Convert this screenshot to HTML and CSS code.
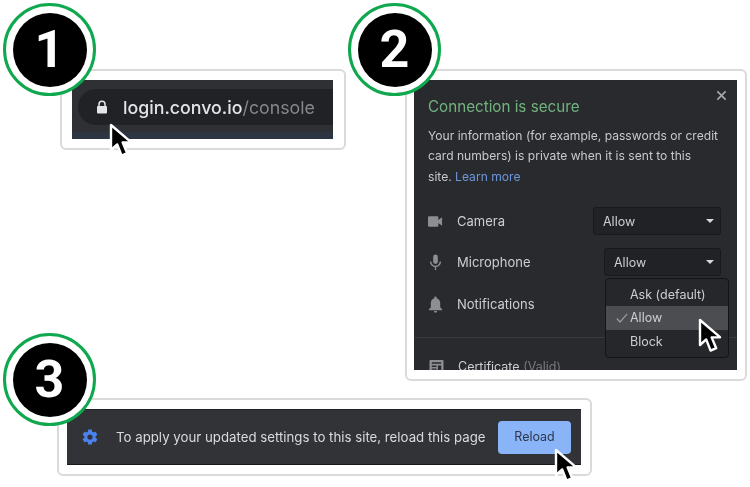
FILE: index.html
```html
<!DOCTYPE html>
<html lang="en">
<head>
    <meta charset="UTF-8">
    <meta name="viewport" content="width=device-width, initial-scale=1.0">
    <title>Allow microphone access</title>
    <link rel="stylesheet" href="styles.css">
</head>
<body>

    <svg class="defs" width="0" height="0">
        <symbol id="pointer" viewBox="0 0 24 36">
            <path d="M2 2 L2 27 L8.2 21.4 L12.6 32.6 L18.2 30.2 L13.6 19.4 L22 19.2 Z" fill="#000" stroke="#fff" stroke-width="2.4" stroke-linejoin="round"/>
        </symbol>
    </svg>

    <div class="top-row">
        <div class="card card-url">
            <div class="badge"><span>1</span></div>
            <div class="shot shot-url">
                <div class="url-pill">
                    <svg class="lock" viewBox="0 0 12 14"><path d="M3 6V4.2a3 3 0 0 1 6 0V6" fill="none" stroke="#e4e5e7" stroke-width="1.5"/><rect x="1" y="6" width="10" height="7.6" rx="1" fill="#e4e5e7"/></svg>
                    <span class="url">login.convo.io<span class="url-path">/console</span></span>
                </div>
            </div>
            <svg class="pointer pointer-url"><use href="#pointer"/></svg>
        </div>

        <div class="card card-site">
            <div class="badge"><span>2</span></div>
            <div class="shot shot-site">
                <svg class="close" viewBox="0 0 12 12"><path d="M1.5 1.5l9 9M10.5 1.5l-9 9" stroke="#a6a8ac" stroke-width="1.8"/></svg>
                <h2 class="secure">Connection is secure</h2>
                <p class="info">Your information (for example, passwords or credit card numbers) is private when it is sent to this<br>site. <a class="learn" href="#">Learn more</a></p>

                <div class="perm perm-camera">
                    <svg class="perm-icon" viewBox="0 0 16 12"><path d="M0 1.5A1.2 1.2 0 0 1 1.2.3h8.6A1.2 1.2 0 0 1 11 1.5v9a1.2 1.2 0 0 1-1.2 1.2H1.2A1.2 1.2 0 0 1 0 10.5zM11 4.3l4-2.800v9l-4-2.800z" fill="#8c8e92"/></svg>
                    <span class="perm-name">Camera</span>
                    <div class="select select-camera">Allow<i class="caret"></i></div>
                </div>
                <div class="perm perm-mic">
                    <svg class="perm-icon perm-icon-tall" viewBox="0 0 16 18"><rect x="5.5" y="0.5" width="5" height="10" rx="2.5" fill="#8c8e92"/><path d="M2.800 8a5.200 5.200 0 0 0 10.400 0M8 13.200V17" fill="none" stroke="#8c8e92" stroke-width="1.5"/></svg>
                    <span class="perm-name">Microphone</span>
                    <div class="select select-mic">Allow<i class="caret"></i></div>
                </div>
                <div class="perm perm-bell">
                    <svg class="perm-icon perm-icon-tall" viewBox="0 0 16 18"><path d="M8 .5a1.300 1.300 0 0 1 1.300 1.300v.5C11.700 3 13 5 13 7.5V12l2 2v1H1v-1l2-2V7.5C3 5 4.300 3 6.700 2.300v-.5A1.300 1.300 0 0 1 8 .5zM6.300 16h3.400a1.700 1.700 0 0 1-3.400 0z" fill="#8c8e92"/></svg>
                    <span class="perm-name">Notifications</span>
                </div>

                <div class="cert">
                    <svg class="perm-icon" viewBox="0 0 16 16"><path fill-rule="evenodd" d="M1.500 1h13A1 1 0 0 1 15.500 2v12a1 1 0 0 1-1 1h-13a1 1 0 0 1-1-1V2a1 1 0 0 1 1-1zM3 3.500V5h10V3.500zM3 7v1.500h5V7zM3 10v1.500h5V10zM9.500 7v5H13V7z" fill="#8c8e92"/></svg>
                    <span class="cert-name">Certificate <span class="cert-state">(Valid)</span></span>
                </div>

                <ul class="menu">
                    <li>Ask (default)</li>
                    <li class="menu-active"><svg class="tick" viewBox="0 0 12 10"><path d="M.8 5.500l3.200 3.500L11.200.8" fill="none" stroke="#9a9b9f" stroke-width="1.2"/></svg>Allow</li>
                    <li>Block</li>
                </ul>
            </div>
            <svg class="pointer pointer-menu"><use href="#pointer"/></svg>
        </div>
    </div>

    <div class="card card-reload">
        <div class="badge"><span>3</span></div>
        <div class="shot shot-reload">
            <svg class="gear" viewBox="0 0 24 24"><path fill="#4c82ee" d="M19.430 12.980a7.800 7.800 0 0 0 0-1.960l2.110-1.650a.5.5 0 0 0 .12-.64l-2-3.460a.5.5 0 0 0-.61-.22l-2.490 1a7.300 7.300 0 0 0-1.690-.98l-.38-2.650A.49.49 0 0 0 14 2h-4a.49.49 0 0 0-.49.42l-.38 2.650a7.700 7.700 0 0 0-1.690.98l-2.490-1a.49.49 0 0 0-.61.22l-2 3.460a.49.49 0 0 0 .12.64l2.110 1.650a7.900 7.900 0 0 0 0 1.960l-2.110 1.650a.5.5 0 0 0-.12.64l2 3.460a.5.5 0 0 0 .61.22l2.490-1c.52.4 1.080.73 1.690.98l.38 2.650c.03.24.24.42.49.42h4c.25 0 .46-.18.49-.42l.38-2.650a7.700 7.700 0 0 0 1.690-.98l2.490 1a.49.49 0 0 0 .61-.22l2-3.460a.5.5 0 0 0-.12-.64zM12 15.500a3.500 3.500 0 1 1 0-7 3.500 3.500 0 0 1 0 7z"/></svg>
            <span class="reload-text">To apply your updated settings to this site, reload this page</span>
            <button class="reload-btn">Reload</button>
        </div>
        <svg class="pointer pointer-reload"><use href="#pointer"/></svg>
    </div>

</body>
</html>
```

FILE: styles.css
```css
html, body {
    margin: 0;
    height: 100%;
    overflow: hidden;
    background: #fff;
}
body {
    font-family: Inter, "Liberation Sans", sans-serif;
    color: #dcdde0;
}
.defs {
    display: block;
    height: 0;
}

.top-row {
    display: flex;
    align-items: flex-start;
    gap: 59px;
    padding: 69px 0 0 60px;
}

.card {
    position: relative;
    box-sizing: border-box;
    flex: none;
    background: #fff;
    border: 2px solid #dadada;
    border-radius: 6px;
}
.card-url {
    width: 286px;
    height: 81px;
    padding: 9px 11px 0 10px;
}
.card-site {
    width: 342px;
    height: 312px;
    padding: 9px 8px 0 7px;
}
.card-reload {
    width: 535px;
    height: 78px;
    margin: 17px 0 0 57px;
    padding: 9px 9px 0 8px;
}

.shot {
    position: relative;
    overflow: hidden;
    box-sizing: border-box;
    filter: blur(0.35px);
}

/* numbered circles */
.badge {
    position: absolute;
    left: -59px;
    top: -68px;
    box-sizing: border-box;
    width: 93px;
    height: 93px;
    padding: 6.5px;
    border: 3.5px solid #0fa84f;
    border-radius: 50%;
    background: #fff;
    z-index: 2;
}
.card-reload .badge {
    left: -56px;
    top: -67px;
}
.badge span {
    display: flex;
    align-items: center;
    justify-content: center;
    height: 100%;
    border-radius: 50%;
    background: #000;
    color: #fff;
    font: 700 52px Roboto, sans-serif;
}

.pointer {
    position: absolute;
    width: 24px;
    height: 36px;
    z-index: 3;
}
.pointer-url {
    left: 47px;
    top: 52px;
}
.pointer-menu {
    left: 291px;
    top: 247px;
}
.pointer-reload {
    left: 495px;
    top: 48px;
}

/* step 1 */
.shot-url {
    height: 59px;
    padding-top: 9px;
    background: linear-gradient(#2f3034 0, #2f3034 52px, #2d3442 52px);
}
.url-pill {
    display: flex;
    align-items: center;
    height: 36px;
    margin-left: 6px;
    padding-left: 18px;
    border-radius: 18px 0 0 18px;
    background: #202226;
}
.lock {
    width: 12px;
    height: 14px;
    margin-right: 15px;
}
.url {
    font-size: 17.800px;
    font-weight: 500;
    color: #e3e4e6;
    white-space: nowrap;
}
.url-path {
    font-weight: 400;
    color: #85878b;
}

/* step 2 */
.shot-site {
    height: 290px;
    padding: 18px 14px 0;
    background: #292a2e;
}
.close {
    position: absolute;
    right: 10px;
    top: 10px;
    width: 11px;
    height: 11px;
}
.secure {
    margin: 0;
    font-size: 15.200px;
    font-weight: 400;
    line-height: 18px;
    color: #71b37f;
}
.info {
    margin: 10px 0 0;
    width: 296px;
    font-size: 12.100px;
    line-height: 20.400px;
    color: #c8c9cc;
}
.learn {
    color: #6e97da;
    text-decoration: none;
}
.perm {
    display: flex;
    align-items: center;
    height: 28px;
    margin-top: 13px;
    font-size: 13px;
}
.perm-camera {
    margin-top: 20px;
}
.perm-bell {
    margin-top: 14px;
}
.perm-icon {
    flex: none;
    width: 15px;
    height: 15px;
    margin-right: 14px;
}
.perm-icon-tall {
    height: 17px;
}
.perm-name {
    color: #cdced1;
}
.select {
    box-sizing: border-box;
    display: flex;
    align-items: center;
    justify-content: space-between;
    height: 28px;
    margin-left: auto;
    margin-right: 2px;
    padding: 0 6px 0 9px;
    background: #212226;
    border: 1px solid #19191c;
    border-radius: 3px;
    font-size: 12.500px;
    color: #cdced1;
}
.select-camera {
    width: 128px;
}
.select-mic {
    width: 117px;
}
.caret {
    width: 0;
    height: 0;
    border: 4px solid transparent;
    border-top: 4px solid #d8d9dc;
    border-bottom: 0;
}
.cert {
    display: flex;
    align-items: center;
    margin: 19px -14px 0;
    padding: 21px 15px 0;
    border-top: 1px solid #38393d;
    font-size: 12.500px;
}
.cert-name {
    color: #cdced1;
}
.cert-state {
    color: #77797d;
}
.menu {
    position: absolute;
    left: 191px;
    top: 198px;
    box-sizing: border-box;
    width: 124px;
    margin: 0;
    padding: 3.5px 0;
    list-style: none;
    background: #26272b;
    border: 1px solid #141417;
    border-radius: 4px;
    font-size: 12.500px;
    color: #cdced1;
}
.menu li {
    position: relative;
    height: 23.500px;
    line-height: 23.500px;
    padding-left: 24px;
}
.menu-active {
    background: #4c4d51;
}
.tick {
    position: absolute;
    left: 10px;
    top: 7px;
    width: 12px;
    height: 10px;
}

/* step 3 */
.shot-reload {
    display: flex;
    align-items: center;
    height: 56px;
    padding: 0 10px 0 14px;
    background: #323337;
    border-top: 1px solid #212225;
    border-bottom: 1px solid #17181a;
}
.gear {
    width: 18px;
    height: 18px;
    margin-right: 17px;
}
.reload-text {
    font-size: 13.250px;
    color: #dadbdd;
    white-space: nowrap;
}
.reload-btn {
    width: 73px;
    height: 33px;
    margin-left: auto;
    padding: 0 0 2px;
    border: 0;
    border-radius: 4px;
    background: #8ab4f8;
    color: #2d3748;
    font: 12.500px Inter, sans-serif;
}
```
